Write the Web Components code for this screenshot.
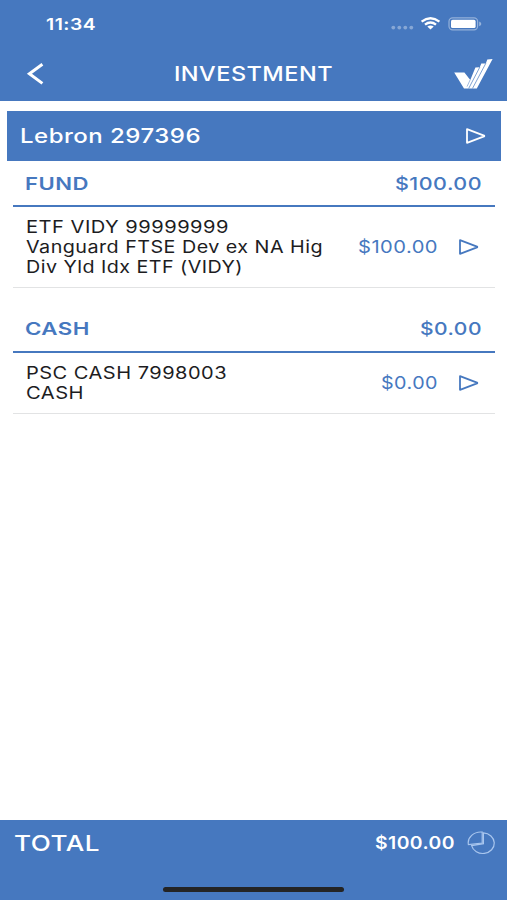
<!DOCTYPE html>
<html lang="en">
<head>
<meta charset="utf-8">
<title>Investment</title>
<style>
  html, body { margin: 0; height: 100%; }
  body { background: #fff; font-family: Inter, "Liberation Sans", sans-serif; }
</style>
</head>
<body>
<invest-app>
  <status-bar slot="top" time="11:34"></status-bar>
  <title-bar slot="top"><wide-text width="159">INVESTMENT</wide-text></title-bar>

  <account-bar><wide-text width="181">Lebron 297396</wide-text></account-bar>

  <holding-group>
    <wide-text slot="name" width="64">FUND</wide-text>
    <wide-text slot="sum" width="87">$100.00</wide-text>
    <holding-row style="height: 80px">
      <wide-text width="203">ETF VIDY 99999999</wide-text>
      <wide-text width="297">Vanguard FTSE Dev ex NA Hig</wide-text>
      <wide-text width="217">Div Yld Idx ETF (VIDY)</wide-text>
      <wide-text slot="value" width="80">$100.00</wide-text>
    </holding-row>
  </holding-group>

  <holding-group>
    <wide-text slot="name" width="65">CASH</wide-text>
    <wide-text slot="sum" width="62">$0.00</wide-text>
    <holding-row style="height: 60px">
      <wide-text width="201">PSC CASH 7998003</wide-text>
      <wide-text width="58">CASH</wide-text>
      <wide-text slot="value" width="57">$0.00</wide-text>
    </holding-row>
  </holding-group>

  <total-bar slot="bottom">
    <wide-text width="86">TOTAL</wide-text>
    <wide-text slot="sum" width="80">$100.00</wide-text>
  </total-bar>
</invest-app>

<script>
(function(){
  const BLUE = '#4678bf';

  const arrow = `
    <svg class="arrow" width="22" height="18" viewBox="0 0 22 18" fill="none"
      stroke="currentColor" stroke-width="1.8" stroke-linejoin="round">
      <path d="M2 2.2 L19 8.6 Q19.6 9 19 9.4 L2 15.8 Z"/>
    </svg>`;

  // one line of text, stretched sideways to the width it is given
  class WideText extends HTMLElement {
    connectedCallback () {
      const root = this.attachShadow({mode: 'open'});
      const width = +this.getAttribute('width');
      root.innerHTML = `
        <style>
        :host { display: block; width: ${width}px; white-space: nowrap; letter-spacing: .4px; }
        span { display: inline-block; transform-origin: 0 50%; vertical-align: top; }
        </style>
        <span><slot></slot></span>
      `;
      const span = root.querySelector('span');
      const natural = span.getBoundingClientRect().width;
      span.style.transform = `scaleX(${width / natural})`;
    }
  }

  class InvestApp extends HTMLElement {
    connectedCallback () {
      this.attachShadow({mode: 'open'}).innerHTML = `
        <style>
        :host { display: flex; flex-direction: column; height: 900px; overflow: hidden; }
        header { height: 101px; background: ${BLUE}; color: #fff; }
        main { flex: 1; padding: 10.4px 6px 0 7px; }
        </style>
        <header><slot name="top"></slot></header>
        <main><slot></slot></main>
        <slot name="bottom"></slot>
      `;
    }
  }

  class StatusBar extends HTMLElement {
    connectedCallback () {
      this.attachShadow({mode: 'open'}).innerHTML = `
        <style>
        :host {
          display: flex;
          align-items: center;
          justify-content: space-between;
          box-sizing: border-box;
          height: 47px;
          padding: 0 25px 0 46px;
          font-size: 16px;
          font-weight: 600;
        }
        svg { display: block; }
        </style>
        <wide-text width="50">${this.getAttribute('time')}</wide-text>
        <svg width="92" height="18" viewBox="0 0 92 18" fill="#fff">
          <g opacity=".35">
            <circle cx="3.3" cy="12.6" r="1.9"/>
            <circle cx="9.3" cy="12.6" r="1.9"/>
            <circle cx="15.3" cy="12.6" r="1.9"/>
            <circle cx="21.3" cy="12.6" r="1.9"/>
          </g>
          <g fill="none" stroke="#fff" stroke-width="2.4">
            <path d="M31.6 6.6 Q40.5 -.3 49.4 6.6"/>
            <path d="M35 9.6 Q40.5 5.3 46 9.6"/>
          </g>
          <path d="M37.3 11.6 Q40.5 9.3 43.7 11.6 L40.5 14.6 Z"/>
          <rect x="59" y="2.9" width="28.6" height="12" rx="3.6" fill="none" stroke="#fff" stroke-width="1.2" opacity=".42"/>
          <rect x="61" y="4.8" width="24.6" height="8.2" rx="1.6"/>
          <path d="M89.2 6.6 Q91.3 7.4 91.3 8.9 Q91.3 10.4 89.2 11.2 Z" opacity=".45"/>
        </svg>
      `;
    }
  }

  class TitleBar extends HTMLElement {
    connectedCallback () {
      this.attachShadow({mode: 'open'}).innerHTML = `
        <style>
        :host {
          display: grid;
          grid-template-columns: 1fr auto 1fr;
          align-items: center;
          box-sizing: border-box;
          height: 53px;
          padding: 0 14px 0 26px;
          font-size: 20px;
          font-weight: 500;
        }
        svg { display: block; }
        .logo { justify-self: end; }
        ::slotted(wide-text) { margin-right: 12px; }
        </style>
        <svg width="20" height="24" viewBox="0 0 20 24" fill="none" stroke="#fff" stroke-width="3">
          <path d="M16.4 2.2 L3.4 11.8 L16.4 21.4"/>
        </svg>
        <slot></slot>
        <svg class="logo" width="40" height="32" viewBox="0 0 40 32">
          <path fill="#fff" d="M1.2 14.6 L11.4 14.6 L17.3 22 L22.4 9.5 L26.8 9.3 L28.3 5.6 L32.8 5.4 L34.3 1.6 L39.6 1 L23.8 30.6 L11 30.6 Z"/>
          <g fill="none" stroke="${BLUE}" stroke-width=".7">
            <path d="M26.9 9 L15.7 30.4"/>
            <path d="M32.9 5.2 L19.5 30.4"/>
            <path d="M17.1 22 L14 28.6" stroke-width=".5"/>
          </g>
        </svg>
      `;
    }
  }

  class AccountBar extends HTMLElement {
    connectedCallback () {
      this.attachShadow({mode: 'open'}).innerHTML = `
        <style>
        :host {
          display: flex;
          align-items: center;
          justify-content: space-between;
          box-sizing: border-box;
          height: 50px;
          padding: 0 14px 0 12.5px;
          background: ${BLUE};
          color: #fff;
          font-size: 20px;
          font-weight: 500;
        }
        .arrow { display: block; }
        </style>
        <slot></slot>
        ${arrow}
      `;
    }
  }

  class HoldingGroup extends HTMLElement {
    connectedCallback () {
      this.attachShadow({mode: 'open'}).innerHTML = `
        <style>
        :host { display: block; margin: 0 6px 19px; }
        .head {
          display: flex;
          align-items: center;
          justify-content: space-between;
          box-sizing: border-box;
          height: 45.6px;
          padding: 0 13px 0 12px;
          border-bottom: 2px solid ${BLUE};
          color: ${BLUE};
          font-size: 17.5px;
          font-weight: 500;
        }
        ::slotted([slot=name]) { font-weight: 600; }
        </style>
        <div class="head"><slot name="name"></slot><slot name="sum"></slot></div>
        <slot></slot>
      `;
    }
  }

  class HoldingRow extends HTMLElement {
    connectedCallback () {
      this.attachShadow({mode: 'open'}).innerHTML = `
        <style>
        :host {
          display: flex;
          align-items: center;
          padding: 0 15px 0 12.5px;
          border-bottom: 1.5px solid #e2e3e4;
          font-size: 17px;
          line-height: 20px;
          color: #1d1d1f;
        }
        .lines { flex: 1; }
        .value { color: ${BLUE}; margin-right: 20px; }
        .arrow { display: block; color: ${BLUE}; }
        </style>
        <div class="lines"><slot></slot></div>
        <div class="value"><slot name="value"></slot></div>
        ${arrow}
      `;
    }
  }

  class TotalBar extends HTMLElement {
    connectedCallback () {
      this.attachShadow({mode: 'open'}).innerHTML = `
        <style>
        :host {
          display: flex;
          flex-direction: column;
          height: 80px;
          background: ${BLUE};
          color: #fff;
          font-size: 21.5px;
          font-weight: 500;
        }
        .row {
          display: flex;
          align-items: center;
          height: 46px;
          padding: 0 11px 0 13.5px;
        }
        ::slotted([slot=sum]) { margin: 0 12px 0 auto; font-size: 17px; font-weight: 600; }
        svg { display: block; }
        .home {
          width: 181px;
          height: 5px;
          margin: 20.5px auto 0;
          border-radius: 3px;
          background: #242424;
        }
        </style>
        <div class="row">
          <slot></slot>
          <slot name="sum"></slot>
          <svg width="29" height="24" viewBox="0 0 29 24" fill="none" stroke="#a9c6ee" stroke-width="1.2">
            <path d="M16.4 1.9 A11.5 10.3 0 1 1 4.6 14.6 L16.4 12.7 Z"/>
            <path d="M15.2 1.1 A12.6 10.8 0 0 0 1.4 13.6 L15.2 12 Z"/>
          </svg>
        </div>
        <div class="home"></div>
      `;
    }
  }

  // containers first, so the text is measured with its final font
  customElements.define('invest-app', InvestApp);
  customElements.define('status-bar', StatusBar);
  customElements.define('title-bar', TitleBar);
  customElements.define('account-bar', AccountBar);
  customElements.define('holding-group', HoldingGroup);
  customElements.define('holding-row', HoldingRow);
  customElements.define('total-bar', TotalBar);
  customElements.define('wide-text', WideText);
})();
</script>
</body>
</html>
